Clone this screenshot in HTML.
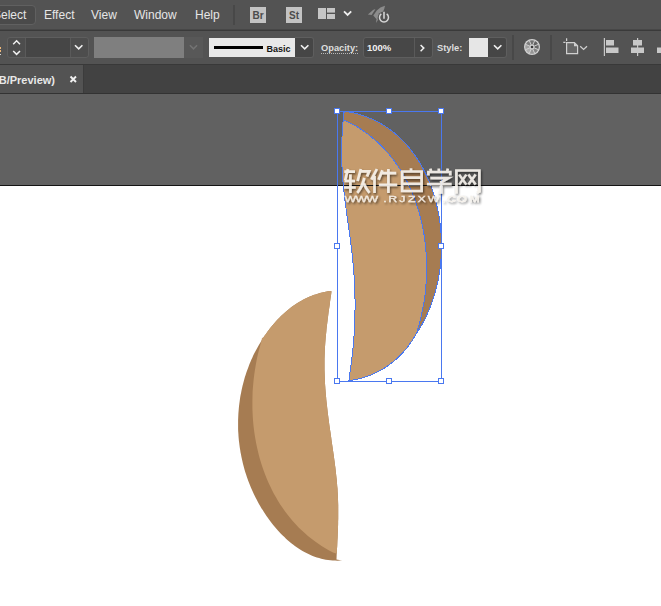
<!DOCTYPE html>
<html><head><meta charset="utf-8">
<style>
*{margin:0;padding:0;box-sizing:border-box}
html,body{width:661px;height:606px;overflow:hidden;background:#fff;font-family:"Liberation Sans",sans-serif}
.a{position:absolute}
#menubar{left:0;top:0;width:661px;height:29px;background:#535353}
#mline{left:0;top:29px;width:661px;height:2px;background:linear-gradient(#474747 0 40%,#3a3a3a 40% 100%)}
#ctrl{left:0;top:31px;width:661px;height:33px;background:#535353}
#cline{left:0;top:64px;width:661px;height:1px;background:#393939}
#tabbar{left:0;top:65px;width:661px;height:29px;background:#424242}
#tab{left:0;top:65px;width:84px;height:28px;background:#535353;border-right:1px solid #3c3c3c}
#tline{left:0;top:93px;width:661px;height:1px;background:#333}
#paste{left:0;top:94px;width:661px;height:91px;background:#616161}
#artline{left:0;top:185px;width:661px;height:1px;background:#111}
.mt{font-size:12px;color:#e6e6e6;top:7px;line-height:16px;white-space:nowrap}
.sep{width:2px;background:#484848}
.box{border:1px solid #5e5e5e;border-radius:3px}
.lbl{font-size:9px;font-weight:bold;color:#dedede;white-space:nowrap;line-height:12px}
</style></head><body>
<div id="menubar" class="a"></div>
<div id="mline" class="a"></div>
<div id="ctrl" class="a"></div>
<div id="cline" class="a"></div>
<div id="tabbar" class="a"></div>
<div id="tab" class="a"></div>
<div id="tline" class="a"></div>
<div id="paste" class="a"></div>
<div id="artline" class="a"></div>

<!-- menu -->
<div class="a" style="left:-6px;top:5px;width:42px;height:20px;border:1px solid #606060;border-radius:4px;background:#4a4a4a"></div>
<div class="a mt" style="left:-7px">Select</div>
<div class="a mt" style="left:44px">Effect</div>
<div class="a mt" style="left:91px">View</div>
<div class="a mt" style="left:134px">Window</div>
<div class="a mt" style="left:195px">Help</div>
<div class="a sep" style="left:233px;top:5px;height:20px"></div>
<div class="a" style="left:250px;top:7px;width:16px;height:16px;background:#c3c3c3;color:#4c4c4c;font-size:10px;font-weight:bold;text-align:center;line-height:17px">Br</div>
<div class="a" style="left:286px;top:7px;width:16px;height:16px;background:#c3c3c3;color:#4c4c4c;font-size:10px;font-weight:bold;text-align:center;line-height:17px">St</div>
<svg class="a" style="left:318px;top:8px" width="18" height="12"><rect x="0" y="0" width="8" height="11" fill="#c6c6c6"/><rect x="9" y="0" width="8" height="4.6" fill="#c6c6c6"/><rect x="9" y="6" width="8" height="5" fill="#c6c6c6"/></svg>
<svg class="a" style="left:342px;top:9px" width="12" height="8"><path d="M2 2.4 L5.6 6 L9.2 2.4" stroke="#f0f0f0" stroke-width="1.8" fill="none"/></svg>
<svg class="a" style="left:360px;top:0" width="40" height="30"><g fill="#8c8c8c"><path d="M7.9 14.6 L13 10 Q14 9.2 15.4 9.3 L11.6 15 Z"/><path d="M25 5.8 Q20 6.8 16.8 10.6 L13.3 15.6 L16.8 19.6 Q20.5 17 22.6 12.8 Q24.5 9.4 25 5.8 Z"/><path d="M16 23 L16.4 19.5 L18.8 18.6 Z"/></g><circle cx="24" cy="17.9" r="6.4" fill="#535353"/><path d="M21.3 13.8 A4.5 4.5 0 1 0 26.7 13.8" stroke="#d4d4d4" stroke-width="1.5" fill="none"/><path d="M24 11.8 V18.8" stroke="#d4d4d4" stroke-width="1.6"/></svg>

<!-- control bar -->
<div class="a" style="left:0;top:47px;width:1px;height:2px;background:#f0b878"></div><div class="a" style="left:0;top:50px;width:1px;height:2px;background:#f0b878"></div><div class="a" style="left:0;top:54px;width:1px;height:1px;background:#d8d8d8"></div>
<div class="a box" style="left:7px;top:37px;width:82px;height:21px;background:#4d4d4d"></div>
<div class="a" style="left:25px;top:38px;width:46px;height:19px;background:#464646;border-left:1px solid #5a5a5a;border-right:1px solid #5a5a5a"></div>
<svg class="a" style="left:11px;top:39px" width="12" height="17"><path d="M2.2 5.2 L5.6 1.8 L9 5.2 M2.2 12 L5.6 15.4 L9 12" stroke="#f0f0f0" stroke-width="1.5" fill="none"/></svg>
<svg class="a" style="left:73px;top:43px" width="12" height="8"><path d="M2 2.2 L5.7 5.9 L9.4 2.2" stroke="#f0f0f0" stroke-width="1.6" fill="none"/></svg>
<div class="a" style="left:94px;top:37px;width:90px;height:21px;background:#7f7f7f"></div>
<div class="a" style="left:184px;top:37px;width:19px;height:21px;background:#585858"></div>
<svg class="a" style="left:188px;top:43px" width="12" height="8"><path d="M1.9 2.3 L5.5 5.9 L9.1 2.3" stroke="#737373" stroke-width="1.5" fill="none"/></svg>

<div class="a" style="left:209px;top:38px;width:86px;height:19px;background:#e8e8e8"></div>
<div class="a" style="left:214px;top:46px;width:49px;height:3px;background:#000"></div>
<div class="a" style="left:266.5px;top:43px;font-size:9px;font-weight:bold;color:#141414;line-height:12px">Basic</div>
<div class="a box" style="left:295px;top:37px;width:19px;height:21px;background:#464646;border-radius:0 3px 3px 0;border-left:none"></div>
<svg class="a" style="left:299px;top:43px" width="12" height="8"><path d="M2 2.2 L5.7 5.9 L9.4 2.2" stroke="#f0f0f0" stroke-width="1.6" fill="none"/></svg>

<div class="a lbl" style="left:321px;top:42px;font-size:9.3px">Opacity:</div>
<div class="a" style="left:321px;top:53px;width:37px;height:1px;background:repeating-linear-gradient(90deg,#b8b8b8 0 1px,transparent 1px 2px)"></div>
<div class="a box" style="left:363px;top:37px;width:70px;height:21px;background:#474747"></div>
<div class="a" style="left:414px;top:38px;width:1px;height:19px;background:#5a5a5a"></div>
<div class="a lbl" style="left:367px;top:42px;color:#f0f0f0;font-size:9.5px">100%</div>
<svg class="a" style="left:419px;top:42px" width="10" height="12"><path d="M1.6 3 L4.8 6.1 L1.6 9.2" stroke="#f0f0f0" stroke-width="1.5" fill="none"/></svg>

<div class="a lbl" style="left:437px;top:42px;font-size:9.3px">Style:</div>
<div class="a" style="left:469px;top:38px;width:19px;height:19px;background:#e6e6e6"></div>
<div class="a box" style="left:488px;top:37px;width:19px;height:21px;background:#464646;border-radius:0 3px 3px 0;border-left:none"></div>
<svg class="a" style="left:492px;top:43px" width="12" height="8"><path d="M2 2.2 L5.7 5.9 L9.4 2.2" stroke="#f0f0f0" stroke-width="1.6" fill="none"/></svg>
<div class="a sep" style="left:512px;top:35px;height:25px"></div>
<svg class="a" style="left:523px;top:38px" width="18" height="18"><circle cx="9" cy="9" r="8" fill="#d2d2d2"/><path d="M6.40 2.72 A6.8 6.8 0 0 1 11.60 2.72 L9.99 6.60 A2.6 2.6 0 0 0 8.01 6.60 Z" fill="#727272"/><path d="M11.60 2.72 A6.8 6.8 0 0 1 15.28 6.40 L11.40 8.01 A2.6 2.6 0 0 0 9.99 6.60 Z" fill="#626262"/><path d="M15.28 6.40 A6.8 6.8 0 0 1 15.28 11.60 L11.40 9.99 A2.6 2.6 0 0 0 11.40 8.01 Z" fill="#686868"/><path d="M15.28 11.60 A6.8 6.8 0 0 1 11.60 15.28 L9.99 11.40 A2.6 2.6 0 0 0 11.40 9.99 Z" fill="#848484"/><path d="M11.60 15.28 A6.8 6.8 0 0 1 6.40 15.28 L8.01 11.40 A2.6 2.6 0 0 0 9.99 11.40 Z" fill="#969696"/><path d="M6.40 15.28 A6.8 6.8 0 0 1 2.72 11.60 L6.60 9.99 A2.6 2.6 0 0 0 8.01 11.40 Z" fill="#aeaeae"/><path d="M2.72 11.60 A6.8 6.8 0 0 1 2.72 6.40 L6.60 8.01 A2.6 2.6 0 0 0 6.60 9.99 Z" fill="#a0a0a0"/><path d="M2.72 6.40 A6.8 6.8 0 0 1 6.40 2.72 L8.01 6.60 A2.6 2.6 0 0 0 6.60 8.01 Z" fill="#7e7e7e"/><path d="M8.08 6.78 L6.24 2.35 M9.92 6.78 L11.76 2.35 M11.22 8.08 L15.65 6.24 M11.22 9.92 L15.65 11.76 M9.92 11.22 L11.76 15.65 M8.08 11.22 L6.24 15.65 M6.78 9.92 L2.35 11.76 M6.78 8.08 L2.35 6.24 " stroke="#d2d2d2" stroke-width="0.9"/><circle cx="9" cy="9" r="1.3" fill="#3a3a3a"/></svg>
<div class="a sep" style="left:550px;top:35px;height:25px"></div>
<svg class="a" style="left:562px;top:37px" width="28" height="18"><path d="M4.6 5.6 H12.4 L15.6 8.8 V16.6 H4.6 Z" fill="#676767" stroke="#d0d0d0" stroke-width="1.2"/><path d="M12 5.4 V9.2 H15.8 Z" fill="#d0d0d0"/><path d="M4.6 1.2 V3.9 M1.3 5.4 H3.5" stroke="#d0d0d0" stroke-width="1.2"/><path d="M18.2 9.2 L21.6 12.4 L25 9.2" stroke="#d0d0d0" stroke-width="1.3" fill="none"/></svg>
<svg class="a" style="left:603px;top:37px" width="58" height="20"><rect x="0.8" y="1" width="1.2" height="18" fill="#c8c8c8"/><rect x="3" y="3" width="8" height="5.5" fill="#c8c8c8"/><rect x="3" y="10.5" width="12.5" height="5.5" fill="#c8c8c8"/><rect x="34" y="1" width="1.2" height="18" fill="#c8c8c8"/><rect x="30" y="3" width="9" height="5.5" fill="#c8c8c8"/><rect x="28" y="10.5" width="13" height="5.5" fill="#c8c8c8"/><rect x="54" y="10.5" width="6" height="5.5" fill="#c8c8c8"/></svg>

<!-- tab -->
<div class="a" style="left:-145px;top:73px;width:200px;text-align:right;font-size:11px;font-weight:bold;color:#e8e8e8;line-height:14px;white-space:nowrap">(RGB/Preview)</div>
<svg class="a" style="left:69px;top:75px" width="9" height="9"><path d="M1.5 1.5 L7 7 M7 1.5 L1.5 7" stroke="#f0f0f0" stroke-width="1.9"/></svg>

<!-- artwork -->
<svg class="a" style="left:0;top:0" width="661" height="606">
<path d="M343.7 112.6 L345.8 111.4 L348.2 111.9 L350.7 112.3 L353.1 112.8 L355.4 113.4 L357.7 114.0 L360.0 114.7 L362.3 115.4 L364.5 116.1 L366.7 116.9 L368.9 117.8 L371.0 118.7 L373.1 119.6 L375.2 120.6 L377.2 121.6 L379.2 122.7 L381.2 123.8 L383.1 125.0 L385.0 126.2 L386.9 127.4 L388.8 128.7 L390.6 130.0 L392.3 131.4 L394.1 132.7 L395.8 134.2 L397.5 135.6 L399.1 137.1 L400.7 138.7 L402.3 140.2 L403.9 141.8 L405.4 143.5 L406.9 145.1 L408.4 146.8 L409.8 148.5 L411.2 150.3 L412.5 152.1 L413.9 153.9 L415.2 155.7 L416.4 157.6 L417.7 159.5 L418.9 161.4 L420.0 163.3 L421.2 165.3 L422.3 167.3 L423.4 169.3 L424.4 171.3 L425.4 173.3 L426.4 175.4 L427.4 177.5 L428.3 179.6 L429.2 181.7 L430.0 183.9 L430.9 186.0 L431.7 188.2 L432.4 190.4 L433.2 192.6 L433.9 194.8 L434.5 197.0 L435.2 199.3 L435.8 201.5 L436.4 203.8 L436.9 206.0 L437.4 208.3 L437.9 210.6 L438.4 212.9 L438.8 215.2 L439.2 217.5 L439.5 219.8 L439.9 222.1 L440.2 224.5 L440.4 226.8 L440.7 229.1 L440.9 231.5 L441.1 233.8 L441.2 236.1 L441.3 238.5 L441.4 240.8 L441.4 243.1 L441.5 245.5 L441.5 247.8 L441.4 250.1 L441.4 252.5 L441.3 254.8 L441.1 257.1 L441.0 259.4 L440.8 261.8 L440.5 264.1 L440.3 266.4 L440.0 268.7 L439.7 271.0 L439.3 273.3 L439.0 275.5 L438.6 277.8 L438.1 280.1 L437.7 282.3 L437.2 284.6 L436.6 286.8 L436.1 289.0 L435.5 291.2 L434.9 293.4 L434.2 295.6 L433.5 297.8 L432.8 299.9 L432.1 302.1 L431.3 304.2 L430.5 306.3 L429.7 308.4 L428.8 310.5 L427.9 312.5 L427.0 314.6 L426.1 316.6 L425.1 318.6 L424.1 320.6 L423.0 322.5 L422.0 324.5 L420.9 326.4 L419.7 328.3 L418.6 330.2 L417.0 332.5 L417.0 332.5 L415.8 334.4 L414.7 336.3 L413.6 338.2 L412.4 340.1 L411.2 342.0 L409.9 343.8 L408.6 345.6 L407.3 347.4 L405.9 349.1 L404.4 350.8 L403.0 352.5 L401.4 354.1 L399.9 355.7 L398.3 357.2 L396.7 358.7 L395.0 360.2 L393.3 361.6 L391.6 363.0 L389.8 364.3 L388.0 365.6 L386.2 366.9 L384.3 368.1 L382.4 369.2 L380.5 370.3 L378.6 371.4 L376.6 372.4 L374.6 373.3 L372.6 374.2 L370.5 375.1 L368.5 375.9 L366.4 376.6 L364.3 377.3 L362.1 378.0 L360.0 378.5 L357.8 379.0 L355.6 379.5 L353.4 379.9 L351.2 380.2 L349.0 380.5 L349.0 380.5 L349.1 377.8 L349.5 375.1 L349.9 372.4 L350.3 369.7 L350.7 367.0 L351.1 364.3 L351.5 361.6 L351.8 358.9 L352.1 356.2 L352.4 353.5 L352.7 350.8 L353.0 348.1 L353.2 345.4 L353.5 342.7 L353.7 340.0 L353.9 337.2 L354.1 334.5 L354.2 331.8 L354.4 329.1 L354.5 326.4 L354.6 323.7 L354.7 321.0 L354.8 318.3 L354.9 315.5 L354.9 312.8 L355.0 310.1 L355.0 307.4 L355.0 304.7 L355.0 302.0 L355.0 299.3 L354.9 296.6 L354.8 293.8 L354.8 291.1 L354.7 288.4 L354.6 285.7 L354.4 283.0 L354.3 280.3 L354.1 277.6 L354.0 274.9 L353.8 272.2 L353.6 269.5 L353.3 266.8 L353.1 264.1 L352.9 261.4 L352.6 258.7 L352.3 256.0 L352.0 253.3 L351.7 250.6 L351.4 247.9 L351.0 245.2 L350.7 242.5 L350.3 239.8 L350.0 237.1 L349.6 234.4 L349.2 231.7 L348.9 229.0 L348.5 226.3 L348.1 223.6 L347.7 220.9 L347.4 218.2 L347.0 215.5 L346.6 212.8 L346.2 210.2 L345.9 207.5 L345.5 204.8 L345.2 202.1 L344.8 199.4 L344.5 196.7 L344.2 194.0 L343.9 191.3 L343.6 188.6 L343.4 185.9 L343.1 183.2 L342.9 180.5 L342.7 177.8 L342.5 175.1 L342.3 172.4 L342.2 169.7 L342.0 166.9 L341.9 164.2 L341.8 161.5 L341.8 158.8 L341.7 156.1 L341.7 153.4 L341.7 150.7 L341.7 147.9 L341.8 145.2 L341.8 142.5 L341.9 139.8 L342.0 137.1 L342.1 134.4 L342.3 131.6 L342.5 128.9 L342.7 126.2 L342.9 123.5 L343.1 120.7 L343.4 118.0 L343.7 115.3 L343.7 112.6 Z" fill="#a67c52"/>
<path d="M343.7 120.4 L345.9 120.8 L348.2 122.0 L350.5 123.1 L352.8 124.4 L355.0 125.6 L357.2 126.9 L359.3 128.3 L361.4 129.6 L363.5 131.0 L365.6 132.5 L367.6 133.9 L369.5 135.5 L371.5 137.0 L373.4 138.6 L375.2 140.2 L377.1 141.8 L378.9 143.5 L380.6 145.2 L382.4 146.9 L384.0 148.7 L385.7 150.5 L387.3 152.3 L388.9 154.2 L390.5 156.1 L392.0 158.0 L393.5 159.9 L394.9 161.8 L396.3 163.8 L397.7 165.8 L399.1 167.9 L400.4 169.9 L401.7 172.0 L402.9 174.1 L404.1 176.2 L405.3 178.3 L406.4 180.5 L407.6 182.7 L408.6 184.9 L409.7 187.1 L410.7 189.3 L411.7 191.6 L412.6 193.9 L413.6 196.1 L414.4 198.4 L415.3 200.8 L416.1 203.1 L416.9 205.4 L417.7 207.8 L418.4 210.2 L419.1 212.5 L419.8 214.9 L420.4 217.3 L421.0 219.8 L421.6 222.2 L422.1 224.6 L422.6 227.1 L423.1 229.5 L423.5 232.0 L424.0 234.4 L424.3 236.9 L424.7 239.4 L425.0 241.9 L425.3 244.4 L425.6 246.9 L425.8 249.4 L426.0 251.8 L426.2 254.3 L426.3 256.8 L426.5 259.4 L426.6 261.9 L426.6 264.4 L426.6 266.9 L426.6 269.4 L426.6 271.9 L426.6 274.4 L426.5 276.8 L426.4 279.3 L426.2 281.8 L426.0 284.3 L425.8 286.8 L425.6 289.2 L425.4 291.7 L425.1 294.2 L424.8 296.6 L424.4 299.1 L424.1 301.5 L423.7 303.9 L423.2 306.3 L422.8 308.7 L422.3 311.1 L421.8 313.5 L421.3 315.9 L420.7 318.2 L420.1 320.5 L419.5 322.9 L418.9 325.2 L418.2 327.5 L417.5 329.7 L417.0 332.5 L417.0 332.5 L415.8 334.4 L414.7 336.3 L413.6 338.2 L412.4 340.1 L411.2 342.0 L409.9 343.8 L408.6 345.6 L407.3 347.4 L405.9 349.1 L404.4 350.8 L403.0 352.5 L401.4 354.1 L399.9 355.7 L398.3 357.2 L396.7 358.7 L395.0 360.2 L393.3 361.6 L391.6 363.0 L389.8 364.3 L388.0 365.6 L386.2 366.9 L384.3 368.1 L382.4 369.2 L380.5 370.3 L378.6 371.4 L376.6 372.4 L374.6 373.3 L372.6 374.2 L370.5 375.1 L368.5 375.9 L366.4 376.6 L364.3 377.3 L362.1 378.0 L360.0 378.5 L357.8 379.0 L355.6 379.5 L353.4 379.9 L351.2 380.2 L349.0 380.5 L349.0 380.5 L349.1 377.8 L349.5 375.1 L349.9 372.4 L350.3 369.7 L350.7 367.0 L351.1 364.3 L351.5 361.6 L351.8 358.9 L352.1 356.2 L352.4 353.5 L352.7 350.8 L353.0 348.1 L353.2 345.4 L353.5 342.7 L353.7 340.0 L353.9 337.2 L354.1 334.5 L354.2 331.8 L354.4 329.1 L354.5 326.4 L354.6 323.7 L354.7 321.0 L354.8 318.3 L354.9 315.5 L354.9 312.8 L355.0 310.1 L355.0 307.4 L355.0 304.7 L355.0 302.0 L355.0 299.3 L354.9 296.6 L354.8 293.8 L354.8 291.1 L354.7 288.4 L354.6 285.7 L354.4 283.0 L354.3 280.3 L354.1 277.6 L354.0 274.9 L353.8 272.2 L353.6 269.5 L353.3 266.8 L353.1 264.1 L352.9 261.4 L352.6 258.7 L352.3 256.0 L352.0 253.3 L351.7 250.6 L351.4 247.9 L351.0 245.2 L350.7 242.5 L350.3 239.8 L350.0 237.1 L349.6 234.4 L349.2 231.7 L348.9 229.0 L348.5 226.3 L348.1 223.6 L347.7 220.9 L347.4 218.2 L347.0 215.5 L346.6 212.8 L346.2 210.2 L345.9 207.5 L345.5 204.8 L345.2 202.1 L344.8 199.4 L344.5 196.7 L344.2 194.0 L343.9 191.3 L343.6 188.6 L343.4 185.9 L343.1 183.2 L342.9 180.5 L342.7 177.8 L342.5 175.1 L342.3 172.4 L342.2 169.7 L342.0 166.9 L341.9 164.2 L341.8 161.5 L341.8 158.8 L341.7 156.1 L341.7 153.4 L341.7 150.7 L341.7 147.9 L341.8 145.2 L341.8 142.5 L341.9 139.8 L342.0 137.1 L342.1 134.4 L342.3 131.6 L342.5 128.9 L342.7 126.2 L342.9 123.5 L343.1 120.7 L343.4 118.0 L343.7 115.3 L343.7 112.6 Z" fill="#c59b6d"/>
<path d="M331.5 291.2 L329.1 291.1 L326.8 291.5 L324.5 291.9 L322.2 292.4 L320.0 293.0 L317.8 293.7 L315.6 294.4 L313.4 295.1 L311.3 295.9 L309.2 296.8 L307.1 297.8 L305.0 298.7 L303.0 299.8 L301.0 300.9 L299.1 302.0 L297.1 303.2 L295.2 304.5 L293.3 305.8 L291.5 307.1 L289.7 308.5 L287.9 309.9 L286.1 311.4 L284.4 312.9 L282.7 314.5 L281.0 316.1 L279.4 317.7 L277.8 319.3 L276.2 321.0 L274.7 322.8 L273.2 324.5 L271.7 326.3 L270.2 328.1 L268.8 329.9 L267.4 331.8 L266.1 333.7 L264.7 335.6 L263.4 337.5 L262.2 339.5 L261.0 341.4 L259.8 343.4 L258.6 345.4 L257.5 347.4 L256.4 349.5 L255.3 351.5 L254.2 353.6 L253.2 355.6 L252.3 357.7 L251.3 359.8 L250.4 361.9 L249.5 364.1 L248.7 366.2 L247.9 368.4 L247.1 370.5 L246.3 372.7 L245.6 374.9 L244.9 377.1 L244.3 379.3 L243.7 381.5 L243.1 383.7 L242.5 385.9 L242.0 388.2 L241.5 390.4 L241.1 392.7 L240.6 394.9 L240.2 397.2 L239.9 399.5 L239.6 401.7 L239.3 404.0 L239.0 406.3 L238.8 408.6 L238.6 410.9 L238.4 413.2 L238.3 415.5 L238.2 417.8 L238.1 420.1 L238.1 422.4 L238.1 424.7 L238.1 427.0 L238.1 429.3 L238.2 431.6 L238.4 433.9 L238.5 436.2 L238.7 438.5 L238.9 440.8 L239.2 443.1 L239.5 445.4 L239.8 447.7 L240.2 449.9 L240.5 452.2 L241.0 454.5 L241.4 456.7 L241.9 459.0 L242.4 461.3 L242.9 463.5 L243.5 465.7 L244.1 468.0 L244.7 470.2 L245.4 472.4 L246.1 474.6 L246.8 476.8 L247.6 479.0 L248.4 481.2 L249.2 483.3 L250.1 485.5 L250.9 487.6 L251.9 489.7 L252.8 491.8 L253.8 493.9 L254.8 496.0 L255.8 498.1 L256.9 500.1 L258.0 502.2 L259.1 504.2 L260.3 506.2 L261.4 508.2 L262.7 510.1 L263.9 512.1 L265.2 514.0 L266.5 515.9 L267.8 517.8 L269.2 519.7 L270.5 521.6 L272.0 523.4 L273.4 525.2 L274.9 527.0 L276.4 528.8 L277.9 530.5 L279.5 532.2 L281.1 533.9 L282.7 535.5 L284.4 537.1 L286.0 538.7 L287.7 540.3 L289.5 541.8 L291.3 543.2 L293.0 544.6 L294.9 546.0 L296.7 547.3 L298.6 548.6 L300.5 549.8 L302.5 551.0 L304.4 552.1 L306.4 553.1 L308.5 554.1 L310.5 555.0 L312.6 555.9 L314.7 556.7 L316.9 557.4 L319.1 558.1 L321.3 558.7 L323.5 559.2 L325.8 559.7 L328.1 560.0 L330.4 560.3 L332.7 560.5 L335.1 560.6 L337.5 560.7 L340.0 560.6 L342.2 560.5 L336.5 559.6 L336.6 556.9 L336.7 554.2 L336.9 551.5 L337.0 548.7 L337.2 546.0 L337.3 543.3 L337.4 540.6 L337.6 537.8 L337.7 535.1 L337.8 532.4 L337.9 529.6 L338.0 526.9 L338.1 524.2 L338.1 521.4 L338.2 518.7 L338.2 516.0 L338.2 513.2 L338.2 510.5 L338.2 507.8 L338.2 505.0 L338.1 502.3 L338.0 499.6 L337.9 496.9 L337.8 494.2 L337.6 491.4 L337.5 488.7 L337.2 486.0 L337.0 483.3 L336.8 480.6 L336.5 477.9 L336.2 475.2 L335.9 472.5 L335.6 469.8 L335.3 467.1 L334.9 464.4 L334.6 461.7 L334.2 459.0 L333.9 456.3 L333.5 453.7 L333.1 451.0 L332.7 448.3 L332.3 445.6 L331.9 442.9 L331.5 440.2 L331.2 437.5 L330.8 434.8 L330.4 432.1 L330.0 429.4 L329.6 426.7 L329.2 424.0 L328.9 421.3 L328.5 418.6 L328.2 415.9 L327.8 413.2 L327.5 410.5 L327.2 407.8 L326.9 405.1 L326.6 402.4 L326.3 399.7 L326.1 397.0 L325.8 394.3 L325.6 391.6 L325.4 388.9 L325.2 386.1 L325.0 383.4 L324.9 380.7 L324.8 378.0 L324.7 375.3 L324.6 372.6 L324.5 369.8 L324.5 367.1 L324.5 364.4 L324.5 361.7 L324.5 359.0 L324.6 356.2 L324.7 353.5 L324.8 350.8 L324.9 348.1 L325.1 345.4 L325.3 342.6 L325.5 339.9 L325.7 337.2 L326.0 334.5 L326.3 331.8 L326.5 329.0 L326.8 326.3 L327.2 323.6 L327.5 320.9 L327.8 318.2 L328.2 315.5 L328.5 312.8 L328.9 310.1 L329.3 307.4 L329.7 304.7 L330.0 302.0 L330.4 299.3 L330.8 296.6 L331.2 293.9 L331.5 291.2 Z" fill="#a67c52"/>
<path d="M331.5 291.2 L329.1 291.1 L326.8 291.5 L324.5 291.9 L322.2 292.4 L320.0 293.0 L317.8 293.7 L315.6 294.4 L313.4 295.1 L311.3 295.9 L309.2 296.8 L307.1 297.8 L305.0 298.7 L303.0 299.8 L301.0 300.9 L299.1 302.0 L297.1 303.2 L295.2 304.5 L293.3 305.8 L291.5 307.1 L289.7 308.5 L287.9 309.9 L286.1 311.4 L284.4 312.9 L282.7 314.5 L281.0 316.1 L279.4 317.7 L277.8 319.3 L276.2 321.0 L274.7 322.8 L273.2 324.5 L271.7 326.3 L270.2 328.1 L268.8 329.9 L267.4 331.8 L266.1 333.7 L264.7 335.6 L263.4 337.5 L262.0 338.0 L261.1 342.3 L260.0 346.3 L258.9 350.3 L257.9 354.3 L257.0 358.3 L256.2 362.4 L255.5 366.5 L254.8 370.7 L254.2 374.9 L253.7 379.0 L253.3 383.2 L252.9 387.5 L252.6 391.7 L252.5 395.9 L252.4 400.2 L252.4 404.5 L252.4 408.7 L252.6 413.0 L252.8 417.2 L253.1 421.5 L253.5 425.7 L254.0 430.0 L254.6 434.2 L255.3 438.4 L256.0 442.5 L256.9 446.7 L257.8 450.8 L258.8 454.9 L259.9 459.0 L261.1 463.1 L262.4 467.1 L263.8 471.1 L265.3 475.0 L266.9 478.9 L268.5 482.7 L270.3 486.5 L272.1 490.3 L274.0 494.0 L276.1 497.6 L278.2 501.2 L280.4 504.7 L282.7 508.1 L285.1 511.5 L287.6 514.8 L290.2 518.1 L292.9 521.3 L295.7 524.3 L298.6 527.4 L301.6 530.3 L304.7 533.1 L307.9 535.9 L311.2 538.5 L314.5 541.1 L318.0 543.6 L321.6 546.0 L325.3 548.2 L329.1 550.4 L333.0 552.5 L336.8 553.8 L336.7 554.2 L336.9 551.5 L337.0 548.7 L337.2 546.0 L337.3 543.3 L337.4 540.6 L337.6 537.8 L337.7 535.1 L337.8 532.4 L337.9 529.6 L338.0 526.9 L338.1 524.2 L338.1 521.4 L338.2 518.7 L338.2 516.0 L338.2 513.2 L338.2 510.5 L338.2 507.8 L338.2 505.0 L338.1 502.3 L338.0 499.6 L337.9 496.9 L337.8 494.2 L337.6 491.4 L337.5 488.7 L337.2 486.0 L337.0 483.3 L336.8 480.6 L336.5 477.9 L336.2 475.2 L335.9 472.5 L335.6 469.8 L335.3 467.1 L334.9 464.4 L334.6 461.7 L334.2 459.0 L333.9 456.3 L333.5 453.7 L333.1 451.0 L332.7 448.3 L332.3 445.6 L331.9 442.9 L331.5 440.2 L331.2 437.5 L330.8 434.8 L330.4 432.1 L330.0 429.4 L329.6 426.7 L329.2 424.0 L328.9 421.3 L328.5 418.6 L328.2 415.9 L327.8 413.2 L327.5 410.5 L327.2 407.8 L326.9 405.1 L326.6 402.4 L326.3 399.7 L326.1 397.0 L325.8 394.3 L325.6 391.6 L325.4 388.9 L325.2 386.1 L325.0 383.4 L324.9 380.7 L324.8 378.0 L324.7 375.3 L324.6 372.6 L324.5 369.8 L324.5 367.1 L324.5 364.4 L324.5 361.7 L324.5 359.0 L324.6 356.2 L324.7 353.5 L324.8 350.8 L324.9 348.1 L325.1 345.4 L325.3 342.6 L325.5 339.9 L325.7 337.2 L326.0 334.5 L326.3 331.8 L326.5 329.0 L326.8 326.3 L327.2 323.6 L327.5 320.9 L327.8 318.2 L328.2 315.5 L328.5 312.8 L328.9 310.1 L329.3 307.4 L329.7 304.7 L330.0 302.0 L330.4 299.3 L330.8 296.6 L331.2 293.9 L331.5 291.2 Z" fill="#c59b6d"/>
<rect x="0" y="185" width="661" height="1" fill="#141414"/>
<g shape-rendering="crispEdges" fill="none" stroke="#4a78f0" stroke-width="1"><path d="M343.7 112.6 L345.8 111.4 L348.2 111.9 L350.7 112.3 L353.1 112.8 L355.4 113.4 L357.7 114.0 L360.0 114.7 L362.3 115.4 L364.5 116.1 L366.7 116.9 L368.9 117.8 L371.0 118.7 L373.1 119.6 L375.2 120.6 L377.2 121.6 L379.2 122.7 L381.2 123.8 L383.1 125.0 L385.0 126.2 L386.9 127.4 L388.8 128.7 L390.6 130.0 L392.3 131.4 L394.1 132.7 L395.8 134.2 L397.5 135.6 L399.1 137.1 L400.7 138.7 L402.3 140.2 L403.9 141.8 L405.4 143.5 L406.9 145.1 L408.4 146.8 L409.8 148.5 L411.2 150.3 L412.5 152.1 L413.9 153.9 L415.2 155.7 L416.4 157.6 L417.7 159.5 L418.9 161.4 L420.0 163.3 L421.2 165.3 L422.3 167.3 L423.4 169.3 L424.4 171.3 L425.4 173.3 L426.4 175.4 L427.4 177.5 L428.3 179.6 L429.2 181.7 L430.0 183.9 L430.9 186.0 L431.7 188.2 L432.4 190.4 L433.2 192.6 L433.9 194.8 L434.5 197.0 L435.2 199.3 L435.8 201.5 L436.4 203.8 L436.9 206.0 L437.4 208.3 L437.9 210.6 L438.4 212.9 L438.8 215.2 L439.2 217.5 L439.5 219.8 L439.9 222.1 L440.2 224.5 L440.4 226.8 L440.7 229.1 L440.9 231.5 L441.1 233.8 L441.2 236.1 L441.3 238.5 L441.4 240.8 L441.4 243.1 L441.5 245.5 L441.5 247.8 L441.4 250.1 L441.4 252.5 L441.3 254.8 L441.1 257.1 L441.0 259.4 L440.8 261.8 L440.5 264.1 L440.3 266.4 L440.0 268.7 L439.7 271.0 L439.3 273.3 L439.0 275.5 L438.6 277.8 L438.1 280.1 L437.7 282.3 L437.2 284.6 L436.6 286.8 L436.1 289.0 L435.5 291.2 L434.9 293.4 L434.2 295.6 L433.5 297.8 L432.8 299.9 L432.1 302.1 L431.3 304.2 L430.5 306.3 L429.7 308.4 L428.8 310.5 L427.9 312.5 L427.0 314.6 L426.1 316.6 L425.1 318.6 L424.1 320.6 L423.0 322.5 L422.0 324.5 L420.9 326.4 L419.7 328.3 L418.6 330.2 L417.0 332.5 L417.0 332.5 L415.8 334.4 L414.7 336.3 L413.6 338.2 L412.4 340.1 L411.2 342.0 L409.9 343.8 L408.6 345.6 L407.3 347.4 L405.9 349.1 L404.4 350.8 L403.0 352.5 L401.4 354.1 L399.9 355.7 L398.3 357.2 L396.7 358.7 L395.0 360.2 L393.3 361.6 L391.6 363.0 L389.8 364.3 L388.0 365.6 L386.2 366.9 L384.3 368.1 L382.4 369.2 L380.5 370.3 L378.6 371.4 L376.6 372.4 L374.6 373.3 L372.6 374.2 L370.5 375.1 L368.5 375.9 L366.4 376.6 L364.3 377.3 L362.1 378.0 L360.0 378.5 L357.8 379.0 L355.6 379.5 L353.4 379.9 L351.2 380.2 L349.0 380.5 L349.0 380.5 L349.1 377.8 L349.5 375.1 L349.9 372.4 L350.3 369.7 L350.7 367.0 L351.1 364.3 L351.5 361.6 L351.8 358.9 L352.1 356.2 L352.4 353.5 L352.7 350.8 L353.0 348.1 L353.2 345.4 L353.5 342.7 L353.7 340.0 L353.9 337.2 L354.1 334.5 L354.2 331.8 L354.4 329.1 L354.5 326.4 L354.6 323.7 L354.7 321.0 L354.8 318.3 L354.9 315.5 L354.9 312.8 L355.0 310.1 L355.0 307.4 L355.0 304.7 L355.0 302.0 L355.0 299.3 L354.9 296.6 L354.8 293.8 L354.8 291.1 L354.7 288.4 L354.6 285.7 L354.4 283.0 L354.3 280.3 L354.1 277.6 L354.0 274.9 L353.8 272.2 L353.6 269.5 L353.3 266.8 L353.1 264.1 L352.9 261.4 L352.6 258.7 L352.3 256.0 L352.0 253.3 L351.7 250.6 L351.4 247.9 L351.0 245.2 L350.7 242.5 L350.3 239.8 L350.0 237.1 L349.6 234.4 L349.2 231.7 L348.9 229.0 L348.5 226.3 L348.1 223.6 L347.7 220.9 L347.4 218.2 L347.0 215.5 L346.6 212.8 L346.2 210.2 L345.9 207.5 L345.5 204.8 L345.2 202.1 L344.8 199.4 L344.5 196.7 L344.2 194.0 L343.9 191.3 L343.6 188.6 L343.4 185.9 L343.1 183.2 L342.9 180.5 L342.7 177.8 L342.5 175.1 L342.3 172.4 L342.2 169.7 L342.0 166.9 L341.9 164.2 L341.8 161.5 L341.8 158.8 L341.7 156.1 L341.7 153.4 L341.7 150.7 L341.7 147.9 L341.8 145.2 L341.8 142.5 L341.9 139.8 L342.0 137.1 L342.1 134.4 L342.3 131.6 L342.5 128.9 L342.7 126.2 L342.9 123.5 L343.1 120.7 L343.4 118.0 L343.7 115.3 L343.7 112.6 Z"/><path d="M343.7 120.4 L345.9 120.8 L348.2 122.0 L350.5 123.1 L352.8 124.4 L355.0 125.6 L357.2 126.9 L359.3 128.3 L361.4 129.6 L363.5 131.0 L365.6 132.5 L367.6 133.9 L369.5 135.5 L371.5 137.0 L373.4 138.6 L375.2 140.2 L377.1 141.8 L378.9 143.5 L380.6 145.2 L382.4 146.9 L384.0 148.7 L385.7 150.5 L387.3 152.3 L388.9 154.2 L390.5 156.1 L392.0 158.0 L393.5 159.9 L394.9 161.8 L396.3 163.8 L397.7 165.8 L399.1 167.9 L400.4 169.9 L401.7 172.0 L402.9 174.1 L404.1 176.2 L405.3 178.3 L406.4 180.5 L407.6 182.7 L408.6 184.9 L409.7 187.1 L410.7 189.3 L411.7 191.6 L412.6 193.9 L413.6 196.1 L414.4 198.4 L415.3 200.8 L416.1 203.1 L416.9 205.4 L417.7 207.8 L418.4 210.2 L419.1 212.5 L419.8 214.9 L420.4 217.3 L421.0 219.8 L421.6 222.2 L422.1 224.6 L422.6 227.1 L423.1 229.5 L423.5 232.0 L424.0 234.4 L424.3 236.9 L424.7 239.4 L425.0 241.9 L425.3 244.4 L425.6 246.9 L425.8 249.4 L426.0 251.8 L426.2 254.3 L426.3 256.8 L426.5 259.4 L426.6 261.9 L426.6 264.4 L426.6 266.9 L426.6 269.4 L426.6 271.9 L426.6 274.4 L426.5 276.8 L426.4 279.3 L426.2 281.8 L426.0 284.3 L425.8 286.8 L425.6 289.2 L425.4 291.7 L425.1 294.2 L424.8 296.6 L424.4 299.1 L424.1 301.5 L423.7 303.9 L423.2 306.3 L422.8 308.7 L422.3 311.1 L421.8 313.5 L421.3 315.9 L420.7 318.2 L420.1 320.5 L419.5 322.9 L418.9 325.2 L418.2 327.5 L417.5 329.7 L417.0 332.5 "/></g>
<g fill="none" stroke="#4a78f0" stroke-width="1"><rect x="337.5" y="111.5" width="104" height="270"/></g>
<g fill="#fff" stroke="#4a78f0" stroke-width="1">
<rect x="334.5" y="108.5" width="5" height="5"/><rect x="386.5" y="108.5" width="5" height="5"/><rect x="438.5" y="108.5" width="5" height="5"/>
<rect x="334.5" y="243.5" width="5" height="5"/><rect x="438.5" y="243.5" width="5" height="5"/>
<rect x="334.5" y="378.5" width="5" height="5"/><rect x="386.5" y="378.5" width="5" height="5"/><rect x="438.5" y="378.5" width="5" height="5"/>
</g>

<g opacity="0.92"><defs><filter id="sh" x="-10%" y="-20%" width="120%" height="150%"><feDropShadow dx="1" dy="1.5" stdDeviation="0.9" flood-color="#000" flood-opacity="0.6"/></filter></defs>
<g filter="url(#sh)" fill="none" stroke="#f6f2ec" stroke-width="2.7" stroke-linecap="butt" stroke-linejoin="miter">
<path d="M344.3 171.7 H355 M347.9 169 L345.2 180.2 M344.5 181 H355 M350.4 174.5 V193 M344 187.5 H355.8"/>
<path d="M360.8 169 L357.6 181 M359.3 171.3 H369.2 L367 176.6 M364.3 177.9 Q362.5 186.5 357.3 192.8 M363.8 183.6 Q366 188.5 369.5 192.8"/>
<path d="M376.9 169 L371.4 179.6 M374.5 176 V193 M382.4 170.2 L378.6 179.8 M381.5 173.2 H396.2 M378.9 184.8 H397.2 M388.4 169 V193"/>
<path d="M402.1 191 V171.5 H421.6 V191 Z M402 177.7 H421.5 M402 183.8 H421.5 M411 168.2 V171"/>
<path d="M430.3 168.6 L431 171 M438.8 168.4 V171 M447.8 168.4 L447.3 171 M428.4 175.4 V172 H450.3 V175.4 M430.3 178.2 H448.3 L442 181.8 M426.9 184.2 H451.7 M441.2 181 V192.5 H438.5"/>
<path d="M456.4 193.6 V170.5 H479.4 V191.5 L477 192.6"/><path stroke-width="2.5" d="M459.2 174.6 L466.3 184.6 M466.3 174.6 L459.2 184.6 M468.4 174.6 L475.6 184.6 M475.6 174.6 L468.4 184.6"/>
</g>
<text transform="scale(1.42,1)" x="242.6 250.4 258.1 269.9 273.5 281.1 287.4 294.0 301.2 311.3 314.8 322.0 330.6" y="201.6" font-family="Liberation Sans" font-size="8.7" fill="#f6f2ec" stroke="#f6f2ec" stroke-width="0.25" filter="url(#sh)">WWW.RJZXW.COM</text>
</g>
</svg>
</body></html>
